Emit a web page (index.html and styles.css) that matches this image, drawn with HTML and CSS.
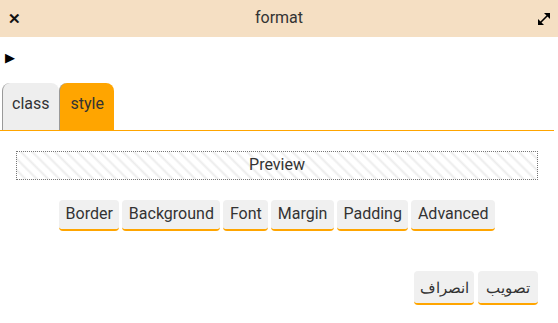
FILE: index.html
```html
<!DOCTYPE html>
<html lang="en">

<head>
    <meta charset="UTF-8">
    <meta name="viewport" content="width=device-width, initial-scale=1.0">
    <title>format</title>
    <link rel="stylesheet" href="styles.css">
</head>

<body>
    <div class="dialog">
        <div class="titleBar">
            <span class="closeBtn">&#x2715;</span>
            <span class="title">format</span>
            <svg class="resizeBtn" width="16" height="16" viewBox="0 0 16 16">
                <path d="M3 13 L13 3" stroke="#000" stroke-width="1.6" />
                <path d="M8 2 L14 2 L14 8 Z" fill="#000" />
                <path d="M2 8 L2 14 L8 14 Z" fill="#000" />
            </svg>
        </div>
        <div class="content">
            <div class="toggle">&#9654;</div>
            <div class="tabs">
                <div class="tab">class</div>
                <div class="tab active">style</div>
            </div>
            <div class="preview">Preview</div>
            <div class="sections">
                <button class="sectionBtn">Border</button>
                <button class="sectionBtn">Background</button>
                <button class="sectionBtn">Font</button>
                <button class="sectionBtn">Margin</button>
                <button class="sectionBtn">Padding</button>
                <button class="sectionBtn">Advanced</button>
            </div>
            <div class="actions" dir="rtl">
                <button class="sectionBtn actionBtn">تصویب</button>
                <button class="sectionBtn actionBtn">انصراف</button>
            </div>
        </div>
    </div>
</body>

</html>
```

FILE: styles.css
```css
body {
    font-family: Roboto, 'Noto Sans', sans-serif;
    margin: 0;
    padding: 0;
    background-color: #fff;
    color: #222;
}

.dialog {
    width: 558px;
    height: 323px;
    overflow: hidden;
}

.titleBar {
    height: 37px;
    background-color: #f5dfc3;
    display: flex;
    align-items: center;
    justify-content: space-between;
    padding: 0 6px 0 6px;
    box-sizing: border-box;
}

.closeBtn {
    font-size: 15px;
    font-weight: bold;
    width: 16px;
    text-align: center;
    color: #111;
}

.title {
    font-size: 16px;
    color: #333;
    margin-top: -2px;
}

.resizeBtn {
    display: block;
}

.toggle {
    font-size: 13px;
    margin: 13px 0 0 5px;
    height: 20px;
    color: #000;
}

.tabs {
    display: flex;
    margin-top: 13px;
    padding-left: 2px;
    border-bottom: 1px solid #ffa500;
    width: 552px;
}

.tab {
    font-size: 16px;
    color: #333;
    padding: 0 10px 0 9px;
    height: 47px;
    line-height: 42px;
    background-color: #eee;
    border-radius: 8px 8px 0 0;
    border-left: 1px solid #999;
    box-sizing: border-box;
}

.tab.active {
    background-color: #ffa500;
    padding: 0 10px 0 10px;
}

.preview {
    margin: 20px 20px 0 16px;
    height: 29px;
    line-height: 25px;
    text-align: center;
    font-size: 16px;
    color: #333;
    border: 1px dotted #777;
    box-sizing: border-box;
    background: repeating-linear-gradient(45deg, #fff 0, #fff 4px, #ececec 6px, #fff 8px);
}

.sections {
    display: flex;
    justify-content: center;
    gap: 3px;
    margin-top: 20px;
    padding-right: 4px;
}

.sectionBtn {
    font-family: Roboto, 'Noto Sans', sans-serif;
    font-size: 16px;
    color: #333;
    background-color: #f0f0f0;
    border: none;
    border-bottom: 2px solid #ffa500;
    border-radius: 4px;
    height: 31px;
    padding: 0 6.5px 2px;
    cursor: pointer;
}

.actions {
    display: flex;
    gap: 4px;
    margin-top: 40px;
    padding-right: 20px;
}

.actionBtn {
    font-family: 'Noto Sans', Roboto, sans-serif;
    font-size: 15px;
    font-weight: 300;
    height: 34px;
    width: 60px;
    padding: 0;
}
```
